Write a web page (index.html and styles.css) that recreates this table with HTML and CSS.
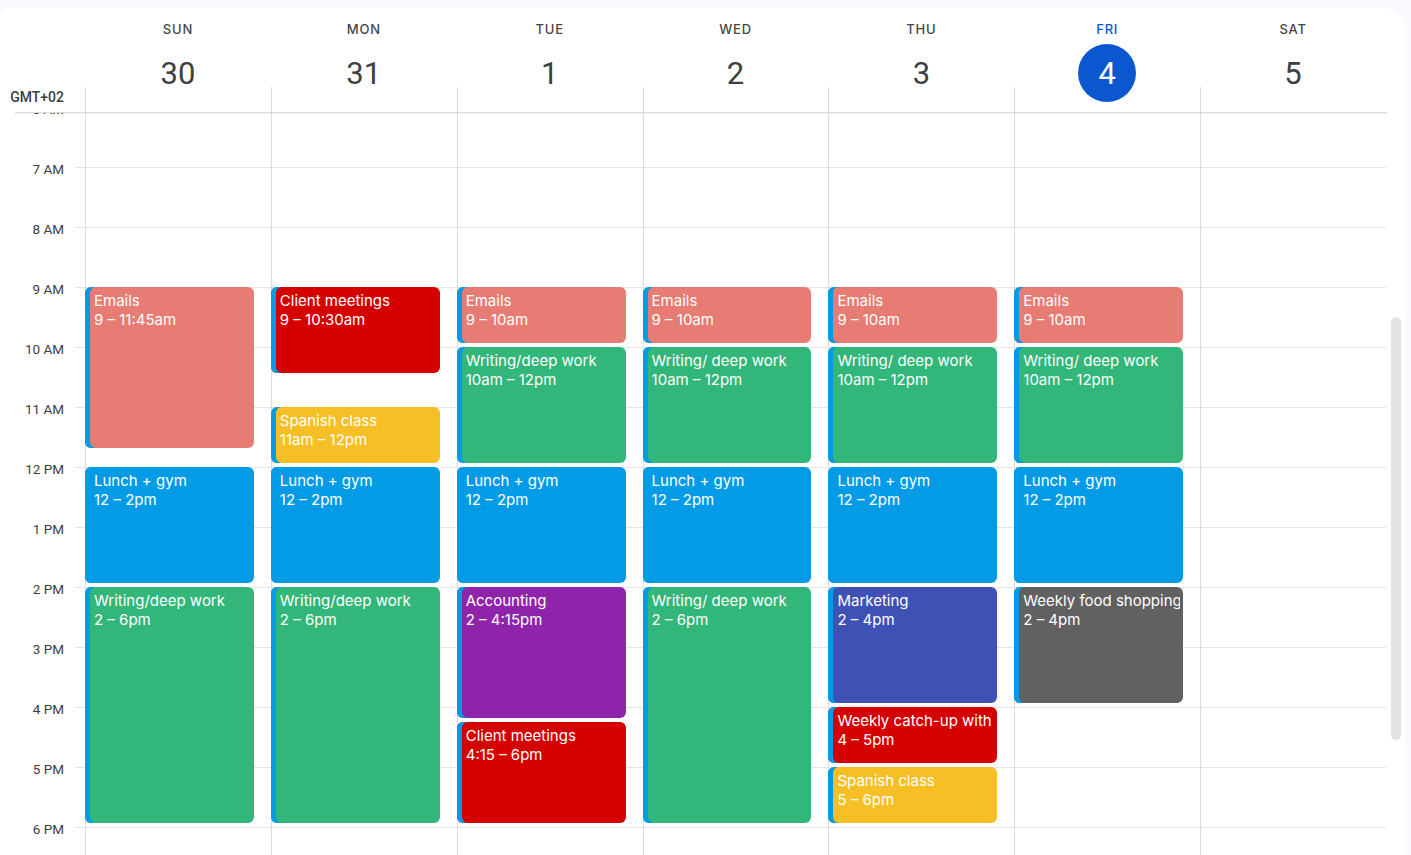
FILE: index.html
```html
<!DOCTYPE html>
<html lang="en">
<head>
<meta charset="utf-8">
<title>Week calendar</title>
<link rel="stylesheet" href="styles.css">
</head>
<body>
<div class="card">
  <div class="header">
    <div class="gutter-head"><span class="tz">GMT+02</span></div>
    <div class="day-head"><div class="dname">SUN</div><div class="dnum">30</div></div>
    <div class="day-head"><div class="dname">MON</div><div class="dnum">31</div></div>
    <div class="day-head"><div class="dname">TUE</div><div class="dnum">1</div></div>
    <div class="day-head"><div class="dname">WED</div><div class="dnum">2</div></div>
    <div class="day-head"><div class="dname">THU</div><div class="dnum">3</div></div>
    <div class="day-head today"><div class="dname">FRI</div><div class="dnum">4</div></div>
    <div class="day-head"><div class="dname">SAT</div><div class="dnum">5</div></div>
    <div class="scroll-head"></div>
  </div>
  <div class="header-rule"></div>
  <div class="body">
    <div class="times">
      <div class="tlabel">6 AM</div>
      <div class="tlabel">7 AM</div>
      <div class="tlabel">8 AM</div>
      <div class="tlabel">9 AM</div>
      <div class="tlabel">10 AM</div>
      <div class="tlabel">11 AM</div>
      <div class="tlabel">12 PM</div>
      <div class="tlabel">1 PM</div>
      <div class="tlabel">2 PM</div>
      <div class="tlabel">3 PM</div>
      <div class="tlabel">4 PM</div>
      <div class="tlabel">5 PM</div>
      <div class="tlabel">6 PM</div>
      <div class="tlabel">7 PM</div>
    </div>
    <div class="grid">
      <div class="day">
        <div class="ev flamingo" style="grid-row: 13 / 24"><div class="et">Emails</div><div class="tm">9 – 11:45am</div></div>
        <div class="ev peacock" style="grid-row: 25 / 33"><div class="et">Lunch + gym</div><div class="tm">12 – 2pm</div></div>
        <div class="ev sage" style="grid-row: 33 / 49"><div class="et">Writing/deep work</div><div class="tm">2 – 6pm</div></div>
      </div>
      <div class="day">
        <div class="ev tomato" style="grid-row: 13 / 19"><div class="et">Client meetings</div><div class="tm">9 – 10:30am</div></div>
        <div class="ev banana" style="grid-row: 21 / 25"><div class="et">Spanish class</div><div class="tm">11am – 12pm</div></div>
        <div class="ev peacock" style="grid-row: 25 / 33"><div class="et">Lunch + gym</div><div class="tm">12 – 2pm</div></div>
        <div class="ev sage" style="grid-row: 33 / 49"><div class="et">Writing/deep work</div><div class="tm">2 – 6pm</div></div>
      </div>
      <div class="day">
        <div class="ev flamingo" style="grid-row: 13 / 17"><div class="et">Emails</div><div class="tm">9 – 10am</div></div>
        <div class="ev sage" style="grid-row: 17 / 25"><div class="et">Writing/deep work</div><div class="tm">10am – 12pm</div></div>
        <div class="ev peacock" style="grid-row: 25 / 33"><div class="et">Lunch + gym</div><div class="tm">12 – 2pm</div></div>
        <div class="ev grape" style="grid-row: 33 / 42"><div class="et">Accounting</div><div class="tm">2 – 4:15pm</div></div>
        <div class="ev tomato" style="grid-row: 42 / 49"><div class="et">Client meetings</div><div class="tm">4:15 – 6pm</div></div>
      </div>
      <div class="day">
        <div class="ev flamingo" style="grid-row: 13 / 17"><div class="et">Emails</div><div class="tm">9 – 10am</div></div>
        <div class="ev sage" style="grid-row: 17 / 25"><div class="et">Writing/ deep work</div><div class="tm">10am – 12pm</div></div>
        <div class="ev peacock" style="grid-row: 25 / 33"><div class="et">Lunch + gym</div><div class="tm">12 – 2pm</div></div>
        <div class="ev sage" style="grid-row: 33 / 49"><div class="et">Writing/ deep work</div><div class="tm">2 – 6pm</div></div>
      </div>
      <div class="day">
        <div class="ev flamingo" style="grid-row: 13 / 17"><div class="et">Emails</div><div class="tm">9 – 10am</div></div>
        <div class="ev sage" style="grid-row: 17 / 25"><div class="et">Writing/ deep work</div><div class="tm">10am – 12pm</div></div>
        <div class="ev peacock" style="grid-row: 25 / 33"><div class="et">Lunch + gym</div><div class="tm">12 – 2pm</div></div>
        <div class="ev blueberry" style="grid-row: 33 / 41"><div class="et">Marketing</div><div class="tm">2 – 4pm</div></div>
        <div class="ev tomato" style="grid-row: 41 / 45"><div class="et">Weekly catch-up with</div><div class="tm">4 – 5pm</div></div>
        <div class="ev banana" style="grid-row: 45 / 49"><div class="et">Spanish class</div><div class="tm">5 – 6pm</div></div>
      </div>
      <div class="day">
        <div class="ev flamingo" style="grid-row: 13 / 17"><div class="et">Emails</div><div class="tm">9 – 10am</div></div>
        <div class="ev sage" style="grid-row: 17 / 25"><div class="et">Writing/ deep work</div><div class="tm">10am – 12pm</div></div>
        <div class="ev peacock" style="grid-row: 25 / 33"><div class="et">Lunch + gym</div><div class="tm">12 – 2pm</div></div>
        <div class="ev graphite" style="grid-row: 33 / 41"><div class="et">Weekly food shopping</div><div class="tm">2 – 4pm</div></div>
      </div>
      <div class="day"></div>
    </div>
    <div class="scroll"><div class="thumb"></div></div>
  </div>
</div>
</body>
</html>
```

FILE: styles.css
```css
* { box-sizing: border-box; }

html, body {
  margin: 0;
  height: 100%;
}

body {
  background: #f8fafd;
  padding-top: 8px;
  overflow: hidden;
  font-family: Inter, "Noto Sans", Roboto, sans-serif;
  color: #1f1f1f;
}

.card {
  width: 1405px;
  height: 847px;
  background: #ffffff;
  border-radius: 10px 24px 0 0;
  display: flex;
  flex-direction: column;
  overflow: hidden;
}

/* ---------- header ---------- */
.header {
  display: grid;
  grid-template-columns: 85px repeat(7, 1fr) 19px;
  height: 104px;
  flex: none;
}

.gutter-head {
  display: flex;
  align-items: flex-end;
  justify-content: flex-end;
  padding: 0 21px 7px 0;
}

.tz {
  font-family: Roboto, "Noto Sans", sans-serif;
  font-size: 14px;
  line-height: 16px;
  font-weight: 500;
  color: #3c4043;
}

.day-head {
  display: flex;
  flex-direction: column;
  align-items: center;
  padding-top: 13px;
  background: linear-gradient(#dadce0, #dadce0) no-repeat left bottom / 1px 25px;
}

.dname {
  font-family: Inter, "Noto Sans", sans-serif;
  font-size: 13px;
  line-height: 16px;
  font-weight: 500;
  letter-spacing: 0.8px;
  color: #444746;
}

.dnum {
  margin-top: 7px;
  width: 58px;
  height: 58px;
  border-radius: 50%;
  display: flex;
  align-items: center;
  justify-content: center;
  font-family: Roboto, "Noto Sans", sans-serif;
  font-size: 31px;
  font-weight: 400;
  color: #3c4043;
}

.today .dname { color: #0b57d0; }
.today .dnum { background: #0b57d0; color: #ffffff; }

.header-rule {
  flex: none;
  height: 1px;
  margin: 0 18px 0 15px;
  background: #dadce0;
  box-shadow: 0 1px 2px rgba(60, 64, 67, 0.12);
  position: relative;
  z-index: 2;
}

/* ---------- body ---------- */
.body {
  flex: 1;
  display: flex;
  overflow: hidden;
  min-height: 0;
}

.times {
  width: 75px;
  flex: none;
  margin-top: -34px;
  display: flex;
  flex-direction: column;
}

.tlabel {
  height: 60px;
  flex: none;
  display: flex;
  align-items: center;
  justify-content: flex-end;
  padding-right: 11px;
  font-family: Roboto, "Noto Sans", sans-serif;
  font-size: 13.5px;
  color: #3c4043;
  white-space: nowrap;
}

.grid {
  flex: 1;
  margin-top: -6px;
  padding-left: 10px;
  display: grid;
  grid-template-columns: repeat(7, 1fr);
  align-self: flex-start;
  background-image: repeating-linear-gradient(to bottom, #e3e5e8 0 1px, transparent 1px 60px);
}

.day {
  display: grid;
  grid-template-rows: repeat(56, 15px);
  border-left: 1px solid #dadce0;
  min-width: 0;
}

.ev {
  grid-column: 1;
  margin: 0 17px 4px -1px;
  border-radius: 6px;
  padding: 4px 3px 0 9px;
  box-shadow: inset 5px 0 0 #039be5;
  color: #ffffff;
  font-size: 15px;
  line-height: 19px;
  overflow: hidden;
  white-space: nowrap;
  min-width: 0;
}

.et, .tm { overflow: hidden; }

.flamingo { background: #e67c73; }
.tomato { background: #d50000; }
.banana { background: #f6bf26; }
.peacock { background: #039be5; }
.sage { background: #33b679; }
.grape { background: #8e24aa; }
.blueberry { background: #3f51b5; }
.graphite { background: #616161; }

.scroll {
  width: 19px;
  flex: none;
  padding: 204px 0 0 5px;
}

.thumb {
  width: 10px;
  height: 423px;
  border-radius: 5px;
  background: #e3e3e3;
}
```
